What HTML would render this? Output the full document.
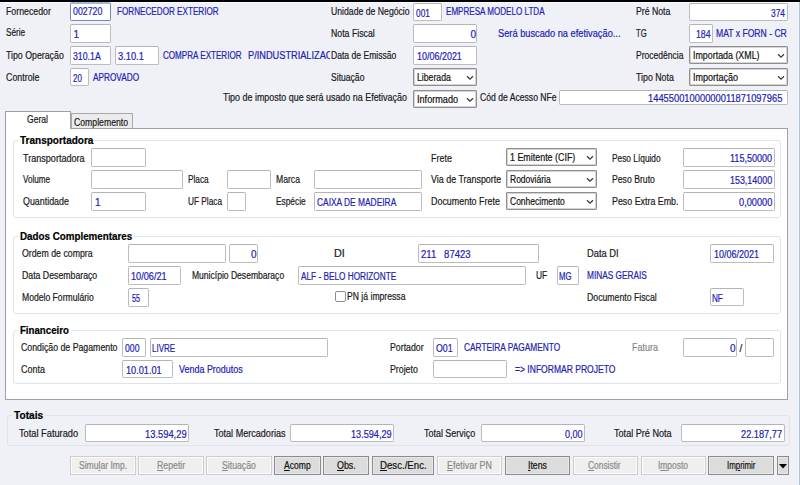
<!DOCTYPE html>
<html><head><meta charset="utf-8"><style>
html,body{margin:0;padding:0;}
body{width:800px;height:485px;overflow:hidden;position:relative;background:#f0f1f7;font-family:"Liberation Sans",sans-serif;font-size:10px;color:#1a1a1a;}
.t{position:absolute;white-space:nowrap;line-height:11px;height:11px;transform-origin:0 9px;-webkit-text-stroke:0.2px currentColor;}
.b{color:#2222b4;}
.k{color:#111;}
.bold{font-weight:bold;color:#000;}
.gt{background:#fff;padding:0 2px;margin-left:-2px;}
.inp{position:absolute;box-sizing:border-box;background:#fff;border:1px solid #bcbcc0;border-top-color:#b4b4b8;border-radius:2px;}
.inp.focus{border-color:#6f8fb2;border-top:2px solid #9db9d6;}
.sel{position:absolute;box-sizing:border-box;background:#fff;border:1px solid #8f8f8f;border-radius:1px;box-shadow:inset 0 0 0 1px #d4d4d4;}
.chev{position:absolute;}
.grp{position:absolute;box-sizing:border-box;border:1px solid #dfe4ea;border-radius:3px;background:#fff;}
.panel{position:absolute;box-sizing:border-box;background:#fff;border:1px solid #a0a0a0;}
.tab{position:absolute;box-sizing:border-box;}
.btn{position:absolute;box-sizing:border-box;border:1px solid #8c8c8c;background:#dcdcdc;box-shadow:inset 0 0 0 1px #e8e8e8;}
.btn.dis{border-color:#cdcdcd;background:#efefef;box-shadow:inset 0 0 0 1px #fbfbfb;}
.gray{color:#8a8a8a;}
.t{z-index:2}
.z4{z-index:4}
u{text-decoration:underline;text-underline-offset:1px;}
.grp.outer{background:transparent;}
.gt.outer{background:#f0f1f7;}

</style></head><body>
<div style="position:absolute;left:0;top:0;width:800px;height:2px;background:#000"></div>
<div style="position:absolute;left:0;top:2px;width:800px;height:1px;background:#fbfbfd"></div>
<div style="position:absolute;left:798px;top:2px;width:1px;height:483px;background:#f6f7fb"></div>
<div style="position:absolute;left:799px;top:2px;width:1px;height:483px;background:#aec5e2"></div>
<div class="inp focus" style="left:70px;top:2px;width:41px;height:19px;"></div>
<div class="inp" style="left:413px;top:3px;width:29px;height:18px;"></div>
<div class="inp" style="left:689px;top:3px;width:99px;height:18px;"></div>
<div class="inp" style="left:70px;top:24px;width:41px;height:19px;"></div>
<div class="inp" style="left:413px;top:24px;width:64px;height:19px;"></div>
<div class="inp" style="left:689px;top:24px;width:24px;height:19px;"></div>
<div class="inp" style="left:70px;top:46px;width:41px;height:19px;"></div>
<div class="inp" style="left:115px;top:46px;width:44px;height:19px;"></div>
<div style="position:absolute;z-index:3;left:329.5px;top:46px;width:80px;height:18px;background:#f0f1f7"></div>
<div class="inp" style="left:413px;top:46px;width:64px;height:19px;"></div>
<div class="sel" style="left:689px;top:46px;width:99px;height:18px;"></div>
<svg class="chev" style="left:776.5px;top:53px" width="8" height="6" viewBox="0 0 8 6"><path d="M1 1.2 L4 4.2 L7 1.2" fill="none" stroke="#3a3a3a" stroke-width="1.25"/></svg>
<div class="inp" style="left:70px;top:68px;width:19px;height:18px;"></div>
<div class="sel" style="left:413px;top:68px;width:64px;height:18px;"></div>
<svg class="chev" style="left:465.5px;top:75px" width="8" height="6" viewBox="0 0 8 6"><path d="M1 1.2 L4 4.2 L7 1.2" fill="none" stroke="#3a3a3a" stroke-width="1.25"/></svg>
<div class="sel" style="left:689px;top:68px;width:99px;height:18px;"></div>
<svg class="chev" style="left:776.5px;top:75px" width="8" height="6" viewBox="0 0 8 6"><path d="M1 1.2 L4 4.2 L7 1.2" fill="none" stroke="#3a3a3a" stroke-width="1.25"/></svg>
<div class="sel" style="left:413px;top:90px;width:64px;height:18px;"></div>
<svg class="chev" style="left:465.5px;top:97px" width="8" height="6" viewBox="0 0 8 6"><path d="M1 1.2 L4 4.2 L7 1.2" fill="none" stroke="#3a3a3a" stroke-width="1.25"/></svg>
<div class="inp" style="left:559px;top:90px;width:229px;height:15px;"></div>
<div class="panel" style="left:5px;top:128px;width:783px;height:272px"></div>
<div class="tab" style="left:71px;top:113px;width:62px;height:15px;background:#ececec;border:1px solid #a9a9a9;border-bottom:none"></div>
<div class="tab" style="left:5px;top:111px;width:66px;height:18px;background:#fff;border:1px solid #a0a0a0;border-bottom:none"></div>
<div class="grp" style="left:13px;top:140px;width:768px;height:78px;"></div>
<div class="inp" style="left:91px;top:148px;width:55px;height:19px;"></div>
<div class="inp" style="left:91px;top:170px;width:92px;height:19px;"></div>
<div class="inp" style="left:91px;top:192px;width:55px;height:19px;"></div>
<div class="inp" style="left:227px;top:170px;width:44px;height:19px;"></div>
<div class="inp" style="left:314px;top:170px;width:108px;height:19px;"></div>
<div class="inp" style="left:227px;top:192px;width:19px;height:19px;"></div>
<div class="inp" style="left:314px;top:192px;width:108px;height:19px;"></div>
<div class="sel" style="left:506px;top:148px;width:91px;height:18px;"></div>
<svg class="chev" style="left:585.5px;top:155px" width="8" height="6" viewBox="0 0 8 6"><path d="M1 1.2 L4 4.2 L7 1.2" fill="none" stroke="#3a3a3a" stroke-width="1.25"/></svg>
<div class="sel" style="left:506px;top:170px;width:91px;height:18px;"></div>
<svg class="chev" style="left:585.5px;top:177px" width="8" height="6" viewBox="0 0 8 6"><path d="M1 1.2 L4 4.2 L7 1.2" fill="none" stroke="#3a3a3a" stroke-width="1.25"/></svg>
<div class="sel" style="left:506px;top:192px;width:91px;height:18px;"></div>
<svg class="chev" style="left:585.5px;top:199px" width="8" height="6" viewBox="0 0 8 6"><path d="M1 1.2 L4 4.2 L7 1.2" fill="none" stroke="#3a3a3a" stroke-width="1.25"/></svg>
<div class="inp" style="left:683px;top:148px;width:92px;height:19px;"></div>
<div class="inp" style="left:683px;top:170px;width:92px;height:19px;"></div>
<div class="inp" style="left:683px;top:192px;width:92px;height:19px;"></div>
<div class="grp" style="left:13px;top:236px;width:768px;height:78px;"></div>
<div class="inp" style="left:128px;top:244px;width:98px;height:19px;"></div>
<div class="inp" style="left:229px;top:244px;width:29px;height:19px;"></div>
<div class="inp" style="left:128px;top:266px;width:53px;height:19px;"></div>
<div class="inp" style="left:298px;top:266px;width:228px;height:19px;"></div>
<div class="inp" style="left:557px;top:266px;width:22px;height:19px;"></div>
<div class="inp" style="left:128px;top:288px;width:21px;height:19px;"></div>
<div class="inp" style="left:418px;top:244px;width:121px;height:19px;"></div>
<div class="inp" style="left:335px;top:291px;width:11px;height:11px;border-color:#8e8f8f"></div>
<div class="inp" style="left:710px;top:244px;width:64px;height:19px;"></div>
<div class="inp" style="left:710px;top:288px;width:34px;height:18px;"></div>
<div class="grp" style="left:13px;top:330px;width:768px;height:54px;"></div>
<div class="inp" style="left:122px;top:338px;width:24px;height:19px;"></div>
<div class="inp" style="left:150px;top:338px;width:178px;height:19px;"></div>
<div class="inp" style="left:122px;top:360px;width:51px;height:18px;"></div>
<div class="inp" style="left:433px;top:338px;width:25px;height:19px;"></div>
<div class="inp" style="left:683px;top:338px;width:54px;height:19px;"></div>
<div class="inp" style="left:745px;top:338px;width:29px;height:19px;"></div>
<div class="inp" style="left:433px;top:360px;width:74px;height:18px;"></div>
<div class="grp outer" style="left:7px;top:415px;width:783px;height:31px;"></div>
<div class="inp" style="left:85px;top:424px;width:104px;height:18px;"></div>
<div class="inp" style="left:290px;top:424px;width:104px;height:18px;"></div>
<div class="inp" style="left:481px;top:424px;width:104px;height:18px;"></div>
<div class="inp" style="left:681px;top:424px;width:104px;height:18px;"></div>
<div class="btn dis" style="left:70px;top:456px;width:66px;height:19px"></div>
<div class="btn dis" style="left:138px;top:456px;width:66px;height:19px"></div>
<div class="btn dis" style="left:206px;top:456px;width:66px;height:19px"></div>
<div class="btn" style="left:274px;top:456px;width:47px;height:19px"></div>
<div class="btn" style="left:323px;top:456px;width:46px;height:19px"></div>
<div class="btn" style="left:372px;top:456px;width:62px;height:19px"></div>
<div class="btn dis" style="left:437px;top:456px;width:65px;height:19px"></div>
<div class="btn" style="left:505px;top:456px;width:65px;height:19px"></div>
<div class="btn dis" style="left:573px;top:456px;width:65px;height:19px"></div>
<div class="btn dis" style="left:641px;top:456px;width:65px;height:19px"></div>
<div class="btn" style="left:708px;top:456px;width:66px;height:19px"></div>
<div class="btn" style="left:777px;top:456px;width:12px;height:19px"></div>
<svg style="position:absolute;left:779px;top:464px" width="8" height="5"><path d="M0 0 H8 L4 4.5 Z" fill="#000"/></svg>
<div class="t " style="left:5.60px;top:5.50px;transform:scale(0.8763,1.0);">Fornecedor</div>
<div class="t b " style="left:72.75px;top:5.50px;transform:scale(0.8785,1.0);">002720</div>
<div class="t b" style="left:117.00px;top:5.50px;transform:scale(0.8134,1.0);">FORNECEDOR EXTERIOR</div>
<div class="t " style="left:330.90px;top:5.50px;transform:scale(0.8676,1.0);">Unidade de Negócio</div>
<div class="t b " style="left:416.25px;top:7.50px;transform:scale(0.8322,1.0);">001</div>
<div class="t b" style="left:445.75px;top:5.50px;transform:scale(0.8073,1.0);">EMPRESA MODELO LTDA</div>
<div class="t " style="left:636.00px;top:5.50px;transform:scale(0.8709,1.0);">Pré Nota</div>
<div class="t b " style="left:770.90px;top:7.50px;transform:scale(0.8410,1.0);">374</div>
<div class="t " style="left:5.60px;top:26.50px;transform:scale(0.8199,1.0);">Série</div>
<div class="t b " style="left:73.50px;top:28.50px;transform:scale(1.0000,1.0);">1</div>
<div class="t " style="left:330.90px;top:27.50px;transform:scale(0.8736,1.0);">Nota Fiscal</div>
<div class="t b " style="left:470.50px;top:28.50px;transform:scale(1.0000,1.0);">0</div>
<div class="t b" style="left:497.60px;top:27.50px;transform:scale(0.9260,1.0);">Será buscado na efetivação...</div>
<div class="t " style="left:636.00px;top:27.50px;transform:scale(0.7620,1.0);">TG</div>
<div class="t b " style="left:696.25px;top:28.50px;transform:scale(0.8760,1.0);">184</div>
<div class="t b" style="left:715.50px;top:27.50px;transform:scale(0.8590,1.0);">MAT x FORN - CR</div>
<div class="t " style="left:5.60px;top:49.50px;transform:scale(0.8782,1.0);">Tipo Operação</div>
<div class="t b " style="left:73.00px;top:50.50px;transform:scale(0.8743,1.0);">310.1A</div>
<div class="t b " style="left:117.50px;top:50.50px;transform:scale(0.9295,1.0);">3.10.1</div>
<div class="t b" style="left:162.90px;top:49.50px;transform:scale(0.8077,1.0);">COMPRA EXTERIOR</div>
<div class="t b" style="left:247.80px;top:49.50px;transform:scale(0.9215,1.0);">P/INDUSTRIALIZACAO</div>
<div class="t z4" style="left:330.90px;top:49.50px;transform:scale(0.8579,1.0);">Data de Emissão</div>
<div class="t b " style="left:416.75px;top:50.50px;transform:scale(0.8963,1.0);">10/06/2021</div>
<div class="t " style="left:636.00px;top:49.50px;transform:scale(0.8522,1.0);">Procedência</div>
<div class="t k" style="left:692.50px;top:49.50px;transform:scale(0.8869,1.0);">Importada (XML)</div>
<div class="t " style="left:5.60px;top:71.50px;transform:scale(0.8866,1.0);">Controle</div>
<div class="t b " style="left:73.25px;top:72.50px;transform:scale(0.8001,1.0);">20</div>
<div class="t b" style="left:93.00px;top:71.50px;transform:scale(0.8244,1.0);">APROVADO</div>
<div class="t " style="left:330.90px;top:71.50px;transform:scale(0.8589,1.0);">Situação</div>
<div class="t k" style="left:416.50px;top:71.50px;transform:scale(0.8702,1.0);">Liberada</div>
<div class="t " style="left:636.00px;top:71.50px;transform:scale(0.8809,1.0);">Tipo Nota</div>
<div class="t k" style="left:692.50px;top:71.50px;transform:scale(0.9017,1.0);">Importação</div>
<div class="t " style="left:223.00px;top:91.50px;transform:scale(0.8933,1.0);">Tipo de imposto que será usado na Efetivação</div>
<div class="t k" style="left:416.50px;top:93.50px;transform:scale(0.9128,1.0);">Informado</div>
<div class="t " style="left:479.50px;top:91.50px;transform:scale(0.8618,1.0);">Cód de Acesso NFe</div>
<div class="t b " style="left:648.25px;top:93.00px;transform:scale(0.9338,1.0);">14455001000000011871097965</div>
<div class="t " style="left:27.40px;top:113.50px;transform:scale(0.8584,1.0);">Geral</div>
<div class="t " style="left:73.50px;top:116.50px;transform:scale(0.8694,1.0);">Complemento</div>
<div class="t bold gt" style="left:20.40px;top:134.50px;transform:scale(1.0008,1.0);">Transportadora</div>
<div class="t " style="left:22.60px;top:152.50px;transform:scale(0.9059,1.0);">Transportadora</div>
<div class="t " style="left:22.60px;top:174.00px;transform:scale(0.8138,1.0);">Volume</div>
<div class="t " style="left:22.60px;top:196.00px;transform:scale(0.8869,1.0);">Quantidade</div>
<div class="t b " style="left:95.00px;top:196.50px;transform:scale(1.0000,1.0);">1</div>
<div class="t " style="left:187.80px;top:174.00px;transform:scale(0.8250,1.0);">Placa</div>
<div class="t " style="left:276.00px;top:174.00px;transform:scale(0.8610,1.0);">Marca</div>
<div class="t " style="left:187.80px;top:196.00px;transform:scale(0.8277,1.0);">UF Placa</div>
<div class="t " style="left:276.00px;top:196.00px;transform:scale(0.8330,1.0);">Espécie</div>
<div class="t b " style="left:316.60px;top:196.50px;transform:scale(0.8390,1.0);">CAIXA DE MADEIRA</div>
<div class="t " style="left:431.25px;top:152.50px;transform:scale(0.8937,1.0);">Frete</div>
<div class="t k" style="left:510.00px;top:151.50px;transform:scale(0.8902,1.0);">1 Emitente (CIF)</div>
<div class="t " style="left:431.25px;top:174.00px;transform:scale(0.8913,1.0);">Via de Transporte</div>
<div class="t k" style="left:510.00px;top:173.50px;transform:scale(0.8499,1.0);">Rodoviária</div>
<div class="t " style="left:431.25px;top:196.00px;transform:scale(0.8913,1.0);">Documento Frete</div>
<div class="t k" style="left:510.00px;top:195.50px;transform:scale(0.8503,1.0);">Conhecimento</div>
<div class="t " style="left:611.75px;top:152.50px;transform:scale(0.8331,1.0);">Peso Líquido</div>
<div class="t b " style="left:730.00px;top:152.50px;transform:scale(0.9049,1.0);">115,50000</div>
<div class="t " style="left:611.75px;top:174.00px;transform:scale(0.8665,1.0);">Peso Bruto</div>
<div class="t b " style="left:730.00px;top:174.50px;transform:scale(0.8908,1.0);">153,14000</div>
<div class="t " style="left:611.75px;top:196.00px;transform:scale(0.8855,1.0);">Peso Extra Emb.</div>
<div class="t b " style="left:738.75px;top:196.50px;transform:scale(0.9225,1.0);">0,00000</div>
<div class="t bold gt" style="left:20.30px;top:230.50px;transform:scale(0.9807,1.0);">Dados Complementares</div>
<div class="t " style="left:21.70px;top:247.50px;transform:scale(0.8763,1.0);">Ordem de compra</div>
<div class="t b " style="left:251.00px;top:248.50px;transform:scale(1.0000,1.0);">0</div>
<div class="t " style="left:21.70px;top:269.50px;transform:scale(0.8731,1.0);">Data Desembaraço</div>
<div class="t b " style="left:131.25px;top:270.50px;transform:scale(0.9145,1.0);">10/06/21</div>
<div class="t " style="left:191.50px;top:269.50px;transform:scale(0.8544,1.0);">Município Desembaraço</div>
<div class="t b " style="left:300.50px;top:270.50px;transform:scale(0.8240,1.0);">ALF - BELO HORIZONTE</div>
<div class="t " style="left:536.00px;top:269.50px;transform:scale(0.8471,1.0);">UF</div>
<div class="t b " style="left:558.85px;top:270.50px;transform:scale(0.7746,1.0);">MG</div>
<div class="t b" style="left:586.50px;top:269.50px;transform:scale(0.8282,1.0);">MINAS GERAIS</div>
<div class="t " style="left:21.70px;top:291.50px;transform:scale(0.8604,1.0);">Modelo Formulário</div>
<div class="t b " style="left:131.60px;top:292.50px;transform:scale(0.7265,1.0);">55</div>
<div class="t " style="left:333.80px;top:248.00px;transform:scale(1.0844,1.0);">DI</div>
<div class="t b " style="left:421.20px;top:248.50px;transform:scale(0.9520,1.0);">211&nbsp;&nbsp;&nbsp;87423</div>
<div class="t " style="left:347.00px;top:291.00px;transform:scale(0.8617,1.0);">PN já impressa</div>
<div class="t " style="left:586.50px;top:248.00px;transform:scale(0.9314,1.0);">Data DI</div>
<div class="t b " style="left:713.70px;top:248.50px;transform:scale(0.9012,1.0);">10/06/2021</div>
<div class="t " style="left:586.50px;top:291.80px;transform:scale(0.8708,1.0);">Documento Fiscal</div>
<div class="t b " style="left:712.25px;top:292.50px;transform:scale(0.8131,1.0);">NF</div>
<div class="t bold gt" style="left:20.00px;top:324.50px;transform:scale(0.9681,1.0);">Financeiro</div>
<div class="t " style="left:21.25px;top:341.50px;transform:scale(0.8763,1.0);">Condição de Pagamento</div>
<div class="t b " style="left:124.50px;top:342.50px;transform:scale(0.8702,1.0);">000</div>
<div class="t b " style="left:152.10px;top:342.50px;transform:scale(0.8005,1.0);">LIVRE</div>
<div class="t " style="left:21.25px;top:364.00px;transform:scale(0.8941,1.0);">Conta</div>
<div class="t b " style="left:126.20px;top:364.50px;transform:scale(0.9171,1.0);">10.01.01</div>
<div class="t b" style="left:178.50px;top:364.00px;transform:scale(0.8951,1.0);">Venda Produtos</div>
<div class="t " style="left:389.80px;top:341.50px;transform:scale(0.8764,1.0);">Portador</div>
<div class="t b " style="left:435.60px;top:342.50px;transform:scale(0.8790,1.0);">O01</div>
<div class="t b" style="left:463.50px;top:341.50px;transform:scale(0.8319,1.0);">CARTEIRA PAGAMENTO</div>
<div class="t gray" style="left:631.70px;top:341.50px;transform:scale(0.9032,1.0);">Fatura</div>
<div class="t b " style="left:729.90px;top:342.50px;transform:scale(1.0000,1.0);">0</div>
<div class="t " style="left:739.40px;top:342.50px;transform:scale(1.0000,1.0);">/</div>
<div class="t " style="left:389.80px;top:363.50px;transform:scale(0.8779,1.0);">Projeto</div>
<div class="t b" style="left:514.80px;top:363.50px;transform:scale(0.8537,1.0);">=&gt; INFORMAR PROJETO</div>
<div class="t bold gt outer" style="left:14.00px;top:409.50px;transform:scale(1.0122,1.0);">Totais</div>
<div class="t " style="left:19.00px;top:427.50px;transform:scale(0.9244,1.0);">Total Faturado</div>
<div class="t b " style="left:145.00px;top:428.50px;transform:scale(0.9349,1.0);">13.594,29</div>
<div class="t " style="left:213.50px;top:427.50px;transform:scale(0.9060,1.0);">Total Mercadorias</div>
<div class="t b " style="left:351.00px;top:428.50px;transform:scale(0.9126,1.0);">13.594,29</div>
<div class="t " style="left:423.50px;top:427.50px;transform:scale(0.8928,1.0);">Total Serviço</div>
<div class="t b " style="left:564.70px;top:428.50px;transform:scale(0.9045,1.0);">0,00</div>
<div class="t " style="left:613.50px;top:427.50px;transform:scale(0.9091,1.0);">Total Pré Nota</div>
<div class="t b " style="left:741.20px;top:428.50px;transform:scale(0.9237,1.0);">22.187,77</div>
<div class="t gray" style="left:78.60px;top:460.00px;transform:scale(0.8565,1.0);">Simu<u>l</u>ar Imp.</div>
<div class="t gray" style="left:156.60px;top:460.00px;transform:scale(0.8752,1.0);"><u>R</u>epetir</div>
<div class="t gray" style="left:221.50px;top:460.00px;transform:scale(0.8690,1.0);"><u>S</u>ituação</div>
<div class="t k" style="left:283.70px;top:460.00px;transform:scale(0.8586,1.0);"><u>A</u>comp</div>
<div class="t k" style="left:336.90px;top:460.00px;transform:scale(0.8899,1.0);"><u>O</u>bs.</div>
<div class="t k" style="left:380.00px;top:460.00px;transform:scale(0.9649,1.0);"><u>D</u>esc./Enc.</div>
<div class="t gray" style="left:446.90px;top:460.00px;transform:scale(0.8878,1.0);"><u>E</u>fetivar PN</div>
<div class="t k" style="left:527.50px;top:460.00px;transform:scale(0.8764,1.0);"><u>I</u>tens</div>
<div class="t gray" style="left:588.10px;top:460.00px;transform:scale(0.8391,1.0);"><u>C</u>onsistir</div>
<div class="t gray" style="left:657.60px;top:460.00px;transform:scale(0.8414,1.0);">I<u>m</u>posto</div>
<div class="t k" style="left:726.60px;top:460.00px;transform:scale(0.7886,1.0);">Im<u>p</u>rimir</div>
</body></html>
